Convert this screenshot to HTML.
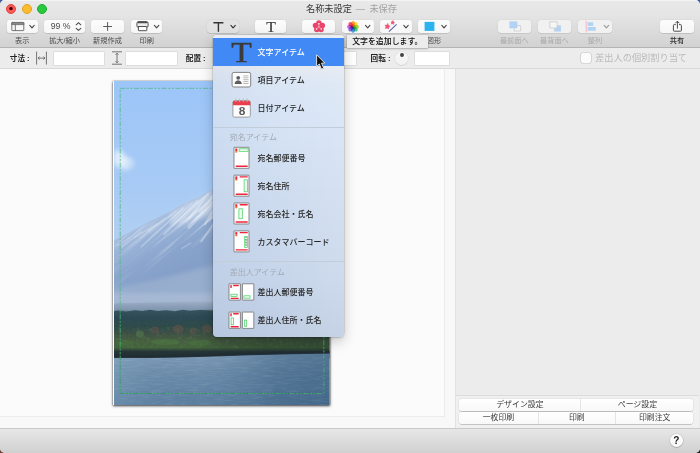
<!DOCTYPE html>
<html lang="ja">
<head>
<meta charset="utf-8">
<title>名称未設定</title>
<style>
html,body{margin:0;padding:0;}
body{width:700px;height:453px;overflow:hidden;position:relative;background:linear-gradient(90deg,#6b3d2e 50%,#1c1c1e 50%) bottom/100% 50% no-repeat,#3d5a96;
 font-family:"Liberation Sans","Noto Sans CJK JP",sans-serif;color:#333;}
.abs{position:absolute;}
#win{will-change:transform;-webkit-font-smoothing:antialiased;position:absolute;left:0;top:0;width:700px;height:453px;border-radius:5px;overflow:hidden;background:#ececec;}
#tb{position:absolute;left:0;top:0;width:700px;height:48px;background:linear-gradient(#e9e9e9 0,#e4e4e4 16px,#d2d2d2 47px);border-bottom:1px solid #b4b4b4;box-sizing:border-box;}
#tb:before{content:"";position:absolute;left:0;top:0;width:100%;height:1px;background:#f4f4f4;}
.tl{position:absolute;top:3.5px;width:10px;height:10px;border-radius:50%;box-sizing:border-box;}
#title{position:absolute;left:1.5px;top:3px;width:700px;text-align:center;font-size:9.2px;line-height:13px;color:#3a3a3a;white-space:pre;}
#title span{color:#a2a2a2;}
.btn{position:absolute;top:19.5px;height:13.5px;border-radius:3px;background:linear-gradient(#fcfcfc,#f6f6f6);box-shadow:0 0.5px 0.6px rgba(0,0,0,.2),0 0 0 0.5px rgba(0,0,0,.05);}
.btn.dis{background:#f1f1f1;box-shadow:0 0.5px 0.5px rgba(0,0,0,.12),0 0 0 0.5px rgba(0,0,0,.04);}
.btn.prs{background:#e2e2e2;}
.lbl{position:absolute;top:35px;height:11px;line-height:11px;font-size:7.2px;color:#4a4a4a;text-align:center;white-space:nowrap;}
.lbl.dis{color:#a9a9a9;}
#bar2{position:absolute;left:0;top:48px;width:700px;height:21px;background:#ececec;border-bottom:1px solid #d9d9d9;box-sizing:border-box;}
.b2l{position:absolute;top:4px;line-height:13px;font-size:7.6px;font-weight:bold;color:#222;white-space:pre;}
.inp{position:absolute;top:3.5px;height:13px;background:#fff;box-shadow:0 0 0 0.5px rgba(0,0,0,.13);}
#canvas{position:absolute;left:0;top:69px;width:455.4px;height:359px;background:#f8f8f8;}
#paper{position:absolute;left:0;top:0;width:444px;height:347px;background:#fbfbfb;border-right:1px solid #ececec;border-bottom:1px solid #ececec;}
#rp{position:absolute;left:455.4px;top:69px;width:244.6px;height:359px;background:#ececec;border-left:1px solid #e2e2e2;box-sizing:border-box;}
#bb{position:absolute;left:0;top:428px;width:700px;height:25px;background:linear-gradient(#e7e7e7,#d0d0d0);border-top:1px solid #c9c9c9;box-sizing:border-box;}

#menu{position:absolute;left:213.3px;top:35.3px;width:130.4px;height:301.6px;border-radius:3.5px 3.5px 4px 4px;overflow:hidden;
 background:linear-gradient(90deg,rgba(110,140,185,.07) 0,rgba(255,255,255,0) 45%,rgba(255,255,255,.14) 100%),linear-gradient(#e6eaf0 0,#e4e9f0 10.5%,#dae5f4 16%,#d5e3f5 28%,#cddbef 55%,#c6d5ea 80%,#bdcce2 100%);
 box-shadow:0 0 0 0.5px rgba(0,0,0,.14),0 5px 13px rgba(0,0,0,.2),0 1px 2.5px rgba(0,0,0,.12);}
.mi{position:absolute;left:44.3px;height:28px;line-height:28px;font-size:8px;color:#262626;white-space:nowrap;font-weight:500;}
.mh{position:absolute;left:16.4px;height:12px;line-height:12px;font-size:8px;color:#a3abb6;white-space:nowrap;}
.msep{position:absolute;left:0;width:100%;height:1px;background:#c3cdd9;}
#tip{position:absolute;left:347px;top:35.2px;width:80.8px;height:13.2px;background:#ececec;box-shadow:0 0 0 0.5px rgba(0,0,0,.12),0 1px 2px rgba(0,0,0,.22);font-size:7.9px;line-height:13px;color:#0a0a0a;white-space:nowrap;text-indent:5.2px;font-weight:500;}

.seg{position:absolute;height:12px;border-radius:2.5px;background:linear-gradient(#fff,#f8f8f8);box-shadow:0 0.5px 0.6px rgba(0,0,0,.3),0 0 0 0.5px rgba(0,0,0,.08);display:flex;font-size:7.9px;line-height:12px;color:#3a3a3a;overflow:hidden;}
.seg span{display:block;text-align:center;box-sizing:border-box;border-left:1px solid #e4e4e4;white-space:nowrap;}
.seg span:first-child{border-left:none;}
#help{position:absolute;left:669.6px;top:433.7px;width:13.2px;height:13.2px;border-radius:50%;background:linear-gradient(#fff,#f6f6f6);box-shadow:0 0.5px 1px rgba(0,0,0,.35),0 0 0 0.5px rgba(0,0,0,.1);font-size:10px;line-height:13.4px;text-align:center;color:#222;font-weight:bold;}
</style>
</head>
<body>
<div id="win">
 <div id="tb">
  <div class="tl" style="left:6px;background:#fc5b57;border:0.5px solid #e0443e;"></div>
    <div class="tl" style="left:21.5px;background:#fdbc2e;border:0.5px solid #dfa023;"></div>
  <div class="tl" style="left:36.5px;background:#28c83f;border:0.5px solid #1dad2b;"></div>
  <div class="btn " style="left:6.5px;width:31.5px"></div>
  <div class="btn " style="left:44.3px;width:40.7px"></div>
  <div class="btn " style="left:91px;width:33px"></div>
  <div class="btn " style="left:131px;width:31.3px"></div>
  <div class="btn prs" style="left:207.4px;width:31.6px"></div>
  <div class="btn " style="left:255px;width:31.2px"></div>
  <div class="btn " style="left:302.3px;width:32.9px"></div>
  <div class="btn " style="left:342px;width:31.8px"></div>
  <div class="btn " style="left:380px;width:31.7px"></div>
  <div class="btn " style="left:418.3px;width:31.4px"></div>
  <div class="btn dis" style="left:497.8px;width:33.4px"></div>
  <div class="btn dis" style="left:538px;width:33.2px"></div>
  <div class="btn dis" style="left:577.7px;width:34.6px"></div>
  <div class="btn " style="left:660.3px;width:33.4px"></div>
  <div class="lbl " style="left:-7.800000000000001px;width:60px">表示</div>
  <div class="lbl " style="left:34.5px;width:60px">拡大/縮小</div>
  <div class="lbl " style="left:77.5px;width:60px">新規作成</div>
  <div class="lbl " style="left:116.69999999999999px;width:60px">印刷</div>
  <div class="lbl " style="left:193.2px;width:60px">文字</div>
  <div class="lbl " style="left:240.60000000000002px;width:60px">テキスト</div>
  <div class="lbl " style="left:288.7px;width:60px">素材</div>
  <div class="lbl " style="left:328px;width:60px">写真</div>
  <div class="lbl " style="left:366px;width:60px">効果</div>
  <div class="lbl " style="left:404px;width:60px">図形</div>
  <div class="lbl dis" style="left:484.29999999999995px;width:60px">最前面へ</div>
  <div class="lbl dis" style="left:524.4px;width:60px">最背面へ</div>
  <div class="lbl dis" style="left:565px;width:60px">整列</div>
  <div class="lbl " style="left:647px;width:60px;color:#2e2e2e;font-weight:500">共有</div>
  <div class="abs" style="left:49.6px;top:20.3px;width:22px;height:13px;line-height:13px;font-size:8.7px;color:#4c4c4c;text-align:center;white-space:pre">99 %</div>
  <div class="abs" style="left:263.7px;top:19.9px;width:14px;height:16px;line-height:16px;font-size:14px;font-family:'Liberation Serif',serif;color:#3a3a3a;-webkit-text-stroke:0.2px #3a3a3a;text-align:center;transform:scaleX(1.12)">T</div>
  <svg class="abs" id="tbicons" style="left:0;top:0" width="700" height="48" viewBox="0 0 700 48" fill="none" stroke-linecap="round" stroke-linejoin="round">
  <circle cx="11" cy="8.5" r="1.75" fill="#4d0000" stroke="none"/>
  <g stroke="#666" stroke-width="0.9"><rect x="11.8" y="22.4" width="12" height="8.2" rx="0.5"/><path d="M11.8 24.6H23.8M15.3 24.6V30.6"/><path d="M11.8 23.2H23.8" stroke-width="1.2"/></g>
  <path d="M29.8 25.4L32.0 27.8L34.2 25.4" stroke="#4a4a4a" stroke-width="1.15"/>
  <path d="M76.2 24.8L78.5 22.7L80.8 24.8M76.2 28.3L78.5 30.4L80.8 28.3" stroke="#4a4a4a" stroke-width="1.05"/>
  <path d="M103.2 26.5H112M107.6 22.1V30.9" stroke="#505050" stroke-width="0.95" stroke-linecap="butt"/>
  <g stroke="#505050" stroke-width="1"><rect x="136.9" y="21.6" width="11.2" height="5.8" rx="1.7" fill="#ececec"/><path d="M137.6 22.5H147.4" stroke-width="1.5" stroke-linecap="butt"/><rect x="138.4" y="26.5" width="8.4" height="4.2" rx="0.3" fill="#fff"/></g>
  <path d="M154.4 25.4L156.6 27.8L158.8 25.4" stroke="#4a4a4a" stroke-width="1.15"/>
  <path d="M213.4 22.7H223.4M218.4 22.7V31.8" stroke="#333" stroke-width="1.4" stroke-linecap="butt"/>
  <path d="M230.9 25.4L233.1 27.8L235.3 25.4" stroke="#333" stroke-width="1.15"/>
  <g fill="#e9456a" stroke="none"><circle cx="318.90" cy="23.00" r="2.75"/><circle cx="322.32" cy="25.49" r="2.75"/><circle cx="321.02" cy="29.51" r="2.75"/><circle cx="316.78" cy="29.51" r="2.75"/><circle cx="315.48" cy="25.49" r="2.75"/><circle cx="318.9" cy="26.6" r="3.4"/></g><path d="M318.9 26.900000000000002L316.7 28.8M318.9 26.900000000000002L321.09999999999997 28.8M318.9 26.900000000000002V24.0" stroke="#fbdde4" stroke-width="0.55"/><g fill="#fff" stroke="none"><circle cx="318.9" cy="23.8" r="0.75"/><circle cx="316.5" cy="29.0" r="0.75"/><circle cx="321.29999999999995" cy="29.0" r="0.75"/></g>
  <g stroke="none"><ellipse cx="353.05" cy="23.8" rx="2.0" ry="2.9" fill="#ff961e" opacity="0.85" style="mix-blend-mode:multiply" transform="rotate(0 353.05 26.8)"/><ellipse cx="353.05" cy="23.8" rx="2.0" ry="2.9" fill="#f8e022" opacity="0.85" style="mix-blend-mode:multiply" transform="rotate(45 353.05 26.8)"/><ellipse cx="353.05" cy="23.8" rx="2.0" ry="2.9" fill="#a6d62e" opacity="0.85" style="mix-blend-mode:multiply" transform="rotate(90 353.05 26.8)"/><ellipse cx="353.05" cy="23.8" rx="2.0" ry="2.9" fill="#2fcf6f" opacity="0.85" style="mix-blend-mode:multiply" transform="rotate(135 353.05 26.8)"/><ellipse cx="353.05" cy="23.8" rx="2.0" ry="2.9" fill="#2f90e6" opacity="0.85" style="mix-blend-mode:multiply" transform="rotate(180 353.05 26.8)"/><ellipse cx="353.05" cy="23.8" rx="2.0" ry="2.9" fill="#7a56ee" opacity="0.85" style="mix-blend-mode:multiply" transform="rotate(225 353.05 26.8)"/><ellipse cx="353.05" cy="23.8" rx="2.0" ry="2.9" fill="#c846e4" opacity="0.85" style="mix-blend-mode:multiply" transform="rotate(270 353.05 26.8)"/><ellipse cx="353.05" cy="23.8" rx="2.0" ry="2.9" fill="#f2405c" opacity="0.85" style="mix-blend-mode:multiply" transform="rotate(315 353.05 26.8)"/></g>
  <path d="M365.5 25.4L367.7 27.8L369.9 25.4" stroke="#4a4a4a" stroke-width="1.15"/>
  <polygon points="387.89,23.74 388.45,25.49 390.17,26.11 388.69,27.18 388.63,29.02 387.15,27.93 385.39,28.45 385.96,26.70 384.93,25.19 386.76,25.19" fill="#ef5272" stroke="#ef5272" stroke-width="0.6"/><polygon points="393.03,20.83 393.41,22.01 394.58,22.44 393.57,23.16 393.53,24.41 392.53,23.67 391.33,24.02 391.72,22.84 391.02,21.81 392.27,21.81" fill="#ef5272" stroke="#ef5272" stroke-width="0.6"/>
  <path d="M389.2 31.3L396.3 24.6" stroke="#5561a8" stroke-width="1.05"/>
  <path d="M403.8 25.4L406.0 27.8L408.2 25.4" stroke="#4a4a4a" stroke-width="1.15"/>
  <rect x="424.6" y="21.9" width="9.8" height="9" fill="#2ab3ee" stroke="none"/>
  <path d="M441.8 25.4L444.0 27.8L446.2 25.4" stroke="#4a4a4a" stroke-width="1.15"/>
  <rect x="514.6" y="25.6" width="6" height="5.4" fill="#f4f4f4" stroke="#c9c9c9" stroke-width="0.7"/><rect x="510" y="21.8" width="7" height="6.2" fill="#b3d3f4" stroke="#a9cbee" stroke-width="0.5"/>
  <rect x="554.6" y="25.8" width="6" height="5.4" fill="#b3d3f4" stroke="#a9cbee" stroke-width="0.5"/><rect x="550.2" y="21.8" width="7" height="6.2" fill="#f6f6f6" stroke="#c4c4c4" stroke-width="0.7"/>
  <path d="M586.2 21.2V32" stroke="#f5a9b0" stroke-width="0.8"/><rect x="587.6" y="22.2" width="5.6" height="3.8" fill="#b3d3f4" stroke="none"/><rect x="587.6" y="27" width="8.2" height="3.8" fill="#b3d3f4" stroke="none"/>
  <path d="M604.2 25.4L606.4 27.8L608.6 25.4" stroke="#9a9a9a" stroke-width="1.15"/>
  <g stroke="#4a4a4a" stroke-width="1"><path d="M675.4 24.6H674.2Q673.4 24.6 673.4 25.4V30.4Q673.4 31.2 674.2 31.2H680.6Q681.4 31.2 681.4 30.4V25.4Q681.4 24.6 680.6 24.6H679.4"/><path d="M677.4 28.2V21.4M675.6 23L677.4 21.2L679.2 23"/></g>
  </svg>
  <div id="title">名称未設定<span> <i style="font-style:normal;margin:0 2px 0 1.2px">—</i> 未保存</span></div>
 </div>
 <div id="bar2">
  <div class="b2l" style="left:9.8px">寸法 :</div>
  <div class="inp" style="left:53.5px;width:50.5px"></div>
  <div class="inp" style="left:125.5px;width:51px"></div>
  <div class="b2l" style="left:185.8px">配置 :</div>
  <div class="inp" style="left:228px;width:50px"></div>
  <div class="inp" style="left:306px;width:50.3px"></div>
  <div class="b2l" style="left:370.6px">回転 :</div>
  <div class="abs" style="left:395.4px;top:3.7px;width:13px;height:13px;border-radius:50%;background:linear-gradient(#f8f8f8,#f1f1f1);box-shadow:0 0.5px 1px rgba(0,0,0,.16),0 0 0 0.5px rgba(0,0,0,.05);"></div>
  <div class="abs" style="left:400.1px;top:5.1px;width:3.8px;height:3.8px;border-radius:50%;background:#454545;"></div>
  <div class="inp" style="left:415.3px;width:34px"></div>
  <div class="abs" style="left:581.3px;top:5.3px;width:10px;height:10px;border-radius:2px;background:#fbfbfb;box-shadow:0 0 0 0.6px rgba(0,0,0,.16);"></div>
  <div class="abs" style="left:595.2px;top:4px;line-height:13px;font-size:9.2px;color:#b9b9b9;white-space:nowrap">差出人の個別割り当て</div>
  <svg class="abs" style="left:0;top:0" width="200" height="21" viewBox="0 48 200 21" fill="none" stroke="#555" stroke-width="0.8">
   <path d="M36.6 51.6V64.6M46.4 51.6V64.6M38 58.1H45"/><path d="M39.6 56.6L38 58.1L39.6 59.6M43.4 56.6L45 58.1L43.4 59.6" stroke-width="0.7"/>
   <path d="M112 51.8H122M112 64.2H122M117 53.2V62.8"/><path d="M115.5 54.8L117 53.2L118.5 54.8M115.5 61.2L117 62.8L118.5 61.2" stroke-width="0.7"/>
  </svg>
 </div>
 <div id="canvas"><div id="paper"></div>
  <div class="abs" id="photo" style="left:113px;top:12px;width:217.4px;height:323.7px;background:#fff;box-shadow:0 0.5px 2.5px rgba(0,0,0,.75),0 0 1px rgba(0,0,0,.5);"></div>
  <svg class="abs" style="left:113px;top:12px" width="217.4" height="323.7" viewBox="113 81 217.4 323.7" preserveAspectRatio="none">
   <defs>
    <linearGradient id="sky" x1="0" y1="81" x2="0" y2="300" gradientUnits="userSpaceOnUse">
     <stop offset="0" stop-color="#9cc5f8"/><stop offset="0.5" stop-color="#a8cbf5"/><stop offset="0.8" stop-color="#b4d0f0"/><stop offset="1" stop-color="#bcd2ea"/>
    </linearGradient>
    <linearGradient id="mtn" x1="150" y1="221" x2="182" y2="285" gradientUnits="userSpaceOnUse">
     <stop offset="0" stop-color="#a8bfdf"/><stop offset="0.22" stop-color="#98b2d7"/><stop offset="0.5" stop-color="#8aa5cd"/><stop offset="0.8" stop-color="#849fc8"/><stop offset="1" stop-color="#88a3ca"/>
    </linearGradient>
    <linearGradient id="lake" x1="0" y1="353" x2="0" y2="405" gradientUnits="userSpaceOnUse">
     <stop offset="0" stop-color="#809db9"/><stop offset="0.4" stop-color="#6c8cab"/><stop offset="1" stop-color="#5b7e9f"/>
    </linearGradient>
    <linearGradient id="lakeR" x1="113" y1="0" x2="331" y2="0" gradientUnits="userSpaceOnUse">
     <stop offset="0" stop-color="#8fb0cc" stop-opacity=".3"/><stop offset="0.4" stop-color="#4a6f90" stop-opacity="0"/><stop offset="0.75" stop-color="#2f5577" stop-opacity=".4"/><stop offset="1" stop-color="#2f5577" stop-opacity=".55"/>
    </linearGradient>
    <linearGradient id="hz" x1="0" y1="301" x2="0" y2="312" gradientUnits="userSpaceOnUse">
     <stop offset="0" stop-color="#9fb1c8"/><stop offset="0.5" stop-color="#8a9eb7"/><stop offset="1" stop-color="#7a8fa9"/>
    </linearGradient>
    <linearGradient id="fdark" x1="190" y1="0" x2="331" y2="0" gradientUnits="userSpaceOnUse">
     <stop offset="0" stop-color="#1c2c28" stop-opacity="0"/><stop offset="0.5" stop-color="#1c2c28" stop-opacity=".3"/><stop offset="1" stop-color="#1c2c28" stop-opacity=".4"/>
    </linearGradient>
    <linearGradient id="forest" x1="0" y1="310" x2="0" y2="357" gradientUnits="userSpaceOnUse">
     <stop offset="0" stop-color="#36545f"/><stop offset="0.15" stop-color="#2c4a55"/><stop offset="0.35" stop-color="#2e4b4b"/><stop offset="0.5" stop-color="#3e5044"/><stop offset="0.66" stop-color="#476040"/><stop offset="0.8" stop-color="#44663b"/><stop offset="0.88" stop-color="#27353a"/><stop offset="1" stop-color="#212d31"/>
    </linearGradient>
    <filter id="b1" x="-20%" y="-20%" width="140%" height="140%"><feGaussianBlur stdDeviation="0.6"/></filter>
    <filter id="b05" x="-20%" y="-20%" width="140%" height="140%"><feGaussianBlur stdDeviation="0.45"/></filter>
    <filter id="b2" x="-30%" y="-30%" width="160%" height="160%"><feGaussianBlur stdDeviation="2"/></filter>
    <filter id="b3" x="-30%" y="-30%" width="160%" height="160%"><feGaussianBlur stdDeviation="4"/></filter>
    <filter id="rip" x="0" y="0" width="100%" height="100%"><feTurbulence type="fractalNoise" baseFrequency="0.08 0.7" numOctaves="2" seed="3"/><feColorMatrix values="0 0 0 0 1  0 0 0 0 1  0 0 0 0 1  0.9 0 0 0 -0.38"/></filter>
    <filter id="ripd" x="0" y="0" width="100%" height="100%"><feTurbulence type="fractalNoise" baseFrequency="0.1 0.8" numOctaves="2" seed="11"/><feColorMatrix values="0 0 0 0 0.1  0 0 0 0 0.2  0 0 0 0 0.3  0.9 0 0 0 -0.38"/></filter>
    <filter id="trees" x="0" y="0" width="100%" height="100%"><feTurbulence type="fractalNoise" baseFrequency="0.35 0.3" numOctaves="2" seed="5"/><feColorMatrix values="0 0 0 0 0.05  0 0 0 0 0.1  0 0 0 0 0.08  1.6 0 0 0 -0.75"/></filter>
    <filter id="treesl" x="0" y="0" width="100%" height="100%"><feTurbulence type="fractalNoise" baseFrequency="0.3 0.35" numOctaves="2" seed="9"/><feColorMatrix values="0 0 0 0 0.55  0 0 0 0 0.7  0 0 0 0 0.4  1.6 0 0 0 -0.8"/></filter>
    <filter id="snow" x="0" y="0" width="100%" height="100%"><feTurbulence type="fractalNoise" baseFrequency="0.018 0.42" numOctaves="2" seed="4"/><feColorMatrix values="0 0 0 0 0.96  0 0 0 0 0.975  0 0 0 0 1  2.8 0 0 0 -1.38"/></filter>
    <linearGradient id="snowfade" x1="150" y1="221" x2="172" y2="265" gradientUnits="userSpaceOnUse">
     <stop offset="0" stop-color="#fff" stop-opacity="1"/><stop offset="0.45" stop-color="#fff" stop-opacity=".75"/><stop offset="1" stop-color="#fff" stop-opacity="0"/>
    </linearGradient>
    <linearGradient id="snowfadex" x1="113" y1="0" x2="215" y2="0" gradientUnits="userSpaceOnUse">
     <stop offset="0" stop-color="#000" stop-opacity=".65"/><stop offset="0.5" stop-color="#000" stop-opacity=".4"/><stop offset="1" stop-color="#000" stop-opacity="0"/>
    </linearGradient>
    <mask id="snowm" maskUnits="userSpaceOnUse" x="100" y="150" width="240" height="170"><g><path d="M110 243.2L130.6 232.8L148.3 223L166 214.5L183.6 204.2L201.2 196.6L211.8 191.3L235 179V315H110Z" fill="url(#snowfade)"/><rect x="100" y="150" width="240" height="170" fill="url(#snowfadex)"/></g></mask>
    <clipPath id="pc"><rect x="114" y="81" width="215.6" height="324"/></clipPath>
   </defs>
   <g clip-path="url(#pc)">
    <rect x="113" y="81" width="218" height="324" fill="url(#sky)"/>
    <g filter="url(#b2)" fill="#fff"><ellipse cx="120" cy="160" rx="7" ry="7" opacity=".62"/><ellipse cx="128" cy="163" rx="6" ry="6" opacity=".4"/><ellipse cx="118" cy="153" rx="5" ry="4" opacity=".4"/><ellipse cx="124" cy="168" rx="5" ry="3" opacity=".3"/></g>
    <path d="M110 242.2L130.6 231.8L148.3 222L166 213.5L183.6 203.2L201.2 195.6L211.8 190.3L235 178L262 166L290 160L331 175V315H110Z" fill="url(#mtn)" filter="url(#b05)"/>
    <g mask="url(#snowm)"><g transform="rotate(-41 160 230)"><rect x="60" y="170" width="220" height="120" filter="url(#snow)" opacity=".9"/></g></g>
    <path d="M214 192L190 202L170 213L172 226L190 222L214 215Z" fill="#fff" opacity=".3" filter="url(#b2)"/>
    <g filter="url(#b1)" stroke="#f4f8fc" fill="none" stroke-linecap="round" opacity=".45">
     <path d="M208.3 193.8L188.9 218.5" stroke-width="2.2" opacity="0.8"/>
     <path d="M197.7 200.9L164.2 234.4" stroke-width="1.8" opacity="0.75"/>
     <path d="M211.8 202.6L188.9 227.4" stroke-width="3" opacity="0.8"/>
     <path d="M183.6 207.9L141.2 246.8" stroke-width="1.5" opacity="0.7"/>
     <path d="M171.2 215L148.3 230.9" stroke-width="1.8" opacity="0.7"/>
     <path d="M157.1 223.8L134.2 237.9" stroke-width="1.6" opacity="0.65"/>
     <path d="M141.2 231.8L121.8 246.8" stroke-width="1.5" opacity="0.65"/>
     <path d="M213.6 223.8L201.2 241.5" stroke-width="2" opacity="0.8"/>
     <path d="M190.6 243.2L181.8 248.5" stroke-width="1.4" opacity="0.6"/>
     <path d="M213 196L200 212" stroke-width="2.4" opacity="0.8"/>
     <path d="M204 197L180 222" stroke-width="1.6" opacity="0.6"/>
     <path d="M192 203L170 224" stroke-width="1.3" opacity="0.55"/>
     <path d="M176 211L150 233" stroke-width="1.2" opacity="0.5"/>
     <path d="M214 210L205 224" stroke-width="2.6" opacity="0.7"/>
     <path d="M130 237L117 246" stroke-width="1.2" opacity="0.55"/>
     <path d="M165 218L140 238" stroke-width="1.1" opacity="0.5"/>
     <path d="M200 206L186 222" stroke-width="1.4" opacity="0.6"/>
    </g>
    <path d="M110 289L140 283L170 276L200 269L230 262L331 262V315H110Z" fill="#a2b6d3" opacity=".6" filter="url(#b2)"/>
    <rect x="110" y="293" width="225" height="12" fill="#b0c0d7" opacity=".6" filter="url(#b2)"/>
    <path d="M110 303.5L150 302.5L200 301.5L260 302L331 301V315H110Z" fill="url(#hz)" filter="url(#b1)"/>
    <path d="M110 312L118 310.6L126 311.5L135 310.2L143 311L150 309.8L158 311L166 310.3L175 311.2L183 309.8L190 310.8L200 310L213 310.5L240 310L331 309V358H110Z" fill="url(#forest)" filter="url(#b05)"/>
    <rect x="113" y="311" width="218" height="40" filter="url(#trees)" opacity=".55"/>
    <rect x="113" y="328" width="218" height="20" filter="url(#treesl)" opacity=".22"/>
    <g filter="url(#b1)" opacity=".5">
     <ellipse cx="140" cy="334" rx="4" ry="3.5" fill="#55804e"/>
     <ellipse cx="155" cy="330" rx="4" ry="3.5" fill="#63504a"/><ellipse cx="178" cy="329" rx="5.5" ry="4" fill="#6d5349"/>
     <ellipse cx="193" cy="331" rx="3.5" ry="3.5" fill="#5f5648"/><ellipse cx="207" cy="328.5" rx="5" ry="4" fill="#6c5248"/>
     <ellipse cx="165" cy="342" rx="14" ry="3" fill="#4f7a42"/><ellipse cx="125" cy="343" rx="9" ry="3" fill="#46703e"/><ellipse cx="200" cy="343" rx="12" ry="3" fill="#4c7640"/>
    </g>
    <rect x="190" y="309" width="141" height="50" fill="url(#fdark)"/>
    <path d="M110 357.5L150 357.6L180 357L215 356L250 354.8L290 353.8L331 353.2V405H110Z" fill="url(#lake)"/>
    <path d="M110 357.5L150 357.6L180 357L215 356L250 354.8L290 353.8L331 353.2V405H110Z" fill="url(#lakeR)"/>
    <rect x="113" y="358" width="218" height="47" filter="url(#rip)" opacity=".22"/>
    <rect x="113" y="358" width="218" height="47" filter="url(#ripd)" opacity=".3"/>
    <path d="M110 356.6L150 356.7L180 356.1L215 355.1L250 353.9L290 352.9L331 352.3" stroke="#232f35" stroke-width="2.6" fill="none" filter="url(#b05)" opacity=".9"/>
    <rect x="120.2" y="88.3" width="203.6" height="305.2" fill="none" stroke="#4fba7d" stroke-width="0.8" stroke-dasharray="5 1.6 2 1.6 2 1.6"/>
    <path d="M120.2 310V393.5H323.8V337" fill="none" stroke="#1f8a3a" stroke-width="0.8" stroke-dasharray="5 1.6 2 1.6 2 1.6" opacity=".55"/>
   </g>
  </svg></div>
 <div id="rp">
  <div class="abs" style="left:0;top:326px;width:243px;height:33px;background:#f0f0f0;border-top:1px solid #dcdcdc;box-sizing:border-box"></div>
  <div class="seg" style="left:3px;top:329.8px;width:234px;"><span style="width:121px">デザイン設定</span><span style="width:113px">ページ設定</span></div>
  <div class="seg" style="left:3px;top:343.2px;width:234px;"><span style="width:78.2px">一枚印刷</span><span style="width:77.4px">印刷</span><span style="width:78.4px">印刷注文</span></div>
 </div>
 <div id="bb"></div>
 <div id="help">?</div>
 <div id="menu">
  <div class="abs" style="left:0;top:0;width:100%;height:3px;background:#eaedf2"></div>
  <div class="abs" style="left:0;top:2.8px;width:100%;height:28px;background:#4189f4"></div>
  <div class="mi" style="top:3.8px;color:#fff">文字アイテム</div>
  <div class="mi" style="top:31.4px">項目アイテム</div>
  <div class="mi" style="top:59.4px">日付アイテム</div>
  <div class="mi" style="top:109.3px">宛名郵便番号</div>
  <div class="mi" style="top:137.3px">宛名住所</div>
  <div class="mi" style="top:165.3px">宛名会社・氏名</div>
  <div class="mi" style="top:193.3px">カスタマバーコード</div>
  <div class="mi" style="top:243.3px">差出人郵便番号</div>
  <div class="mi" style="top:271.3px">差出人住所・氏名</div>
  <div class="msep" style="top:91.3px"></div>
  <div class="mh" style="top:97.2px">宛名アイテム</div>
  <div class="msep" style="top:225.5px"></div>
  <div class="mh" style="top:231.4px">差出人アイテム</div>
  <div class="abs" style="left:17.1px;top:5.4px;width:23px;height:24px;line-height:24px;font-size:28.5px;font-family:'Liberation Serif',serif;color:#3b3b3b;-webkit-text-stroke:0.4px #3b3b3b;text-align:center;transform:scaleX(1.18)">T</div>
<svg class="abs" style="left:0;top:0" width="130.4" height="301.6" viewBox="213.3 35.3 130.4 301.6" fill="none">
<rect x="232.4" y="72.7" width="18.6" height="14.6" rx="1.8" fill="#fdfdfd" stroke="#777" stroke-width="0.9"/><circle cx="238.5" cy="78.1" r="1.9" fill="#5e5e5e"/><path d="M234.9 84.3Q235.1 81.1 238.5 80.5Q241.9 81.1 242.1 84.3Z" fill="#5e5e5e"/><path d="M243.6 76.2H248.8M243.6 78.1H248.8M243.6 80H248.8M243.6 81.9H248.8M243.6 83.8H248.8" stroke="#8a8a8a" stroke-width="0.6"/>
<rect x="233.2" y="101" width="17.4" height="16.4" rx="1.6" fill="#fdfdfd" stroke="#8a8a8a" stroke-width="0.8"/><path d="M233.2 105.6V102.6Q233.2 101 234.8 101H249Q250.6 101 250.6 102.6V105.6Z" fill="#ea3e4c"/><path d="M236.3 99.2V102M239.9 99.2V102M243.6 99.2V102M247.3 99.2V102" stroke="#b9b9b9" stroke-width="0.9" stroke-linecap="round"/>
<rect x="234.3" y="147.6" width="15" height="21" rx="0.2" fill="#fff" stroke="#707070" stroke-width="0.8"/><rect x="235.6" y="148.79999999999998" width="2" height="2.6" fill="#f0243f" stroke="none"/><rect x="235.6" y="151.39999999999998" width="2" height="1.5" fill="#f5702e" stroke="none"/><path d="M236 166.6H248" stroke="#f0243f" stroke-width="1.4"/><rect x="239.4" y="149.1" width="9" height="2.5" fill="#eefaf0" stroke="#3fcf5c" stroke-width="0.7"/>
<rect x="234.3" y="175.5" width="15" height="21" rx="0.2" fill="#fff" stroke="#707070" stroke-width="0.8"/><rect x="235.6" y="176.7" width="2" height="2.6" fill="#f0243f" stroke="none"/><rect x="235.6" y="179.29999999999998" width="2" height="1.5" fill="#f5702e" stroke="none"/><path d="M240 177.2H248" stroke="#f0243f" stroke-width="1.4"/><path d="M236 194.5H248" stroke="#f0243f" stroke-width="1.4"/><rect x="244.4" y="180.1" width="3.4" height="12" fill="#eefaf0" stroke="#3fcf5c" stroke-width="0.7"/>
<rect x="234.3" y="203.3" width="15" height="21" rx="0.2" fill="#fff" stroke="#707070" stroke-width="0.8"/><rect x="235.6" y="204.5" width="2" height="2.6" fill="#f0243f" stroke="none"/><rect x="235.6" y="207.1" width="2" height="1.5" fill="#f5702e" stroke="none"/><path d="M240 205.0H248" stroke="#f0243f" stroke-width="1.4"/><path d="M236 222.3H248" stroke="#f0243f" stroke-width="1.4"/><rect x="239.2" y="209.10000000000002" width="3.4" height="10" fill="#eefaf0" stroke="#3fcf5c" stroke-width="0.7"/>
<rect x="234.3" y="231.2" width="15" height="21" rx="0.2" fill="#fff" stroke="#707070" stroke-width="0.8"/><rect x="235.6" y="232.39999999999998" width="2" height="2.6" fill="#f0243f" stroke="none"/><rect x="235.6" y="234.99999999999997" width="2" height="1.5" fill="#f5702e" stroke="none"/><path d="M240 232.89999999999998H248" stroke="#f0243f" stroke-width="1.4"/><path d="M236 250.2H248" stroke="#f0243f" stroke-width="1.4"/><rect x="245" y="236.7" width="2.6" height="11" fill="#eefaf0" stroke="#3fcf5c" stroke-width="0.7"/><path d="M246.3 237.7V246.7" stroke="#444" stroke-width="1.2" stroke-dasharray="0.7 0.9"/>
<rect x="229.3" y="284.1" width="11.4" height="16.3" rx="0.2" fill="#fff" stroke="#707070" stroke-width="0.8"/><rect x="242.7" y="284.1" width="11.4" height="16.3" rx="0.2" fill="#fff" stroke="#707070" stroke-width="0.8"/><rect x="230.6" y="285.3" width="1.5" height="3" fill="#f0304a"/><path d="M233.5 285.8H239" stroke="#f0243f" stroke-width="1.4"/><path d="M231 298.70000000000005H239" stroke="#f0243f" stroke-width="1.4"/><rect x="231.2" y="294.5" width="6.2" height="2.4" fill="#eefaf0" stroke="#3fcf5c" stroke-width="0.7"/><rect x="244.2" y="296.1" width="6.2" height="2.4" fill="#eefaf0" stroke="#3fcf5c" stroke-width="0.7"/>
<rect x="229.3" y="312.4" width="11.4" height="16.3" rx="0.2" fill="#fff" stroke="#707070" stroke-width="0.8"/><rect x="242.7" y="312.4" width="11.4" height="16.3" rx="0.2" fill="#fff" stroke="#707070" stroke-width="0.8"/><rect x="230.6" y="313.59999999999997" width="1.5" height="3" fill="#f0304a"/><path d="M233.5 314.09999999999997H239" stroke="#f0243f" stroke-width="1.4"/><path d="M231 327.0H239" stroke="#f0243f" stroke-width="1.4"/><rect x="231.4" y="318.2" width="2.4" height="7" fill="#eefaf0" stroke="#3fcf5c" stroke-width="0.7"/><rect x="244.6" y="320.4" width="2.4" height="6.2" fill="#eefaf0" stroke="#3fcf5c" stroke-width="0.7"/>
</svg>
  <div class="abs" style="left:21.5px;top:70.3px;width:14px;height:12px;line-height:12px;font-size:10.4px;font-weight:bold;color:#5c5c5c;text-align:center;transform:scaleX(1.15)">8</div>
 </div>
 <div id="tip">文字を追加します。</div>
 <svg class="abs" style="left:312.75px;top:51.55px" width="13.8" height="19" viewBox="0 0 16 22"><path d="M4.2 3.2V16.8L7.3 13.9L9.8 19.8L12.4 18.7L9.9 12.9H13.8Z" fill="#111" stroke="#fff" stroke-width="1" stroke-linejoin="round" filter="drop-shadow(0 0.6px 0.8px rgba(0,0,0,.5))"/></svg>

</div>
</body>
</html>
